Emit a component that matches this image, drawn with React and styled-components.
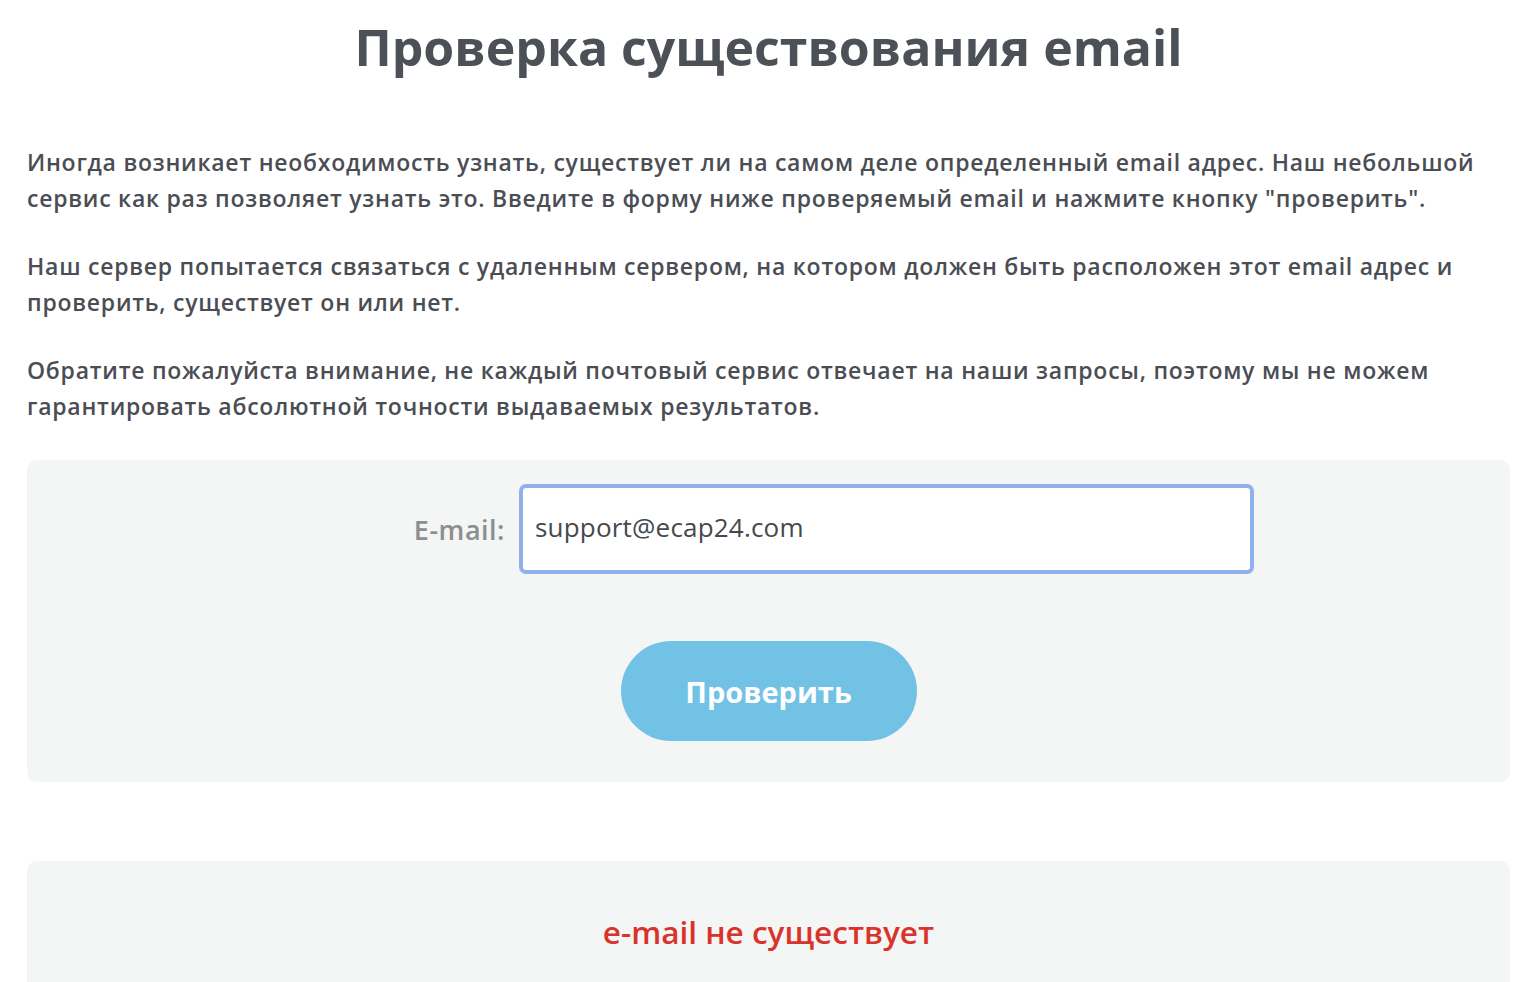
import React, { useState } from 'react';
import styled, { createGlobalStyle } from 'styled-components';

const GlobalStyle = createGlobalStyle`
  html, body {
    margin: 0;
    padding: 0;
    background: #ffffff;
  }
  body {
    font-family: "Open Sans", "Lato", sans-serif;
    color: #4a4e54;
  }
`;

function App() {
  const [email, setEmail] = useState('support@ecap24.com');

  return (
    <>
      <GlobalStyle />
      <Styled.Page>
        <Styled.Title>Проверка существования email</Styled.Title>

        <Styled.Text>
          Иногда возникает необходимость узнать, существует ли на самом деле определенный email адрес. Наш небольшой
          сервис как раз позволяет узнать это. Введите в форму ниже проверяемый email и нажмите кнопку "проверить".
        </Styled.Text>
        <Styled.Text>
          Наш сервер попытается связаться с удаленным сервером, на котором должен быть расположен этот email адрес и
          проверить, существует он или нет.
        </Styled.Text>
        <Styled.Text>
          Обратите пожалуйста внимание, не каждый почтовый сервис отвечает на наши запросы, поэтому мы не можем
          гарантировать абсолютной точности выдаваемых результатов.
        </Styled.Text>

        <Styled.Panel as="form" onSubmit={e => e.preventDefault()}>
          <Styled.Row>
            <Styled.Label htmlFor="email">E-mail:</Styled.Label>
            <Styled.Input id="email" value={email} onChange={e => setEmail(e.target.value)} />
          </Styled.Row>
          <Styled.Button type="submit">Проверить</Styled.Button>
        </Styled.Panel>

        <Styled.Result>
          <Styled.Status>e-mail не существует</Styled.Status>
        </Styled.Result>
      </Styled.Page>
    </>
  );
}

const Styled = {
  Page: styled.main`
    padding: 0 22px 0 27px;
    display: flex;
    flex-direction: column;
  `,
  Title: styled.h1`
    margin: 17px 0 67px;
    text-align: center;
    font-family: "Open Sans", "DejaVu Sans", sans-serif;
    font-weight: 700;
    font-size: 50px;
    line-height: 60px;
    color: #4c5157;
  `,
  Text: styled.p`
    margin: 0 0 32px;
    font-size: 23px;
    line-height: 36px;
    font-weight: 600;
    letter-spacing: 0.75px;
    color: #4a4e54;
  `,
  Panel: styled.div`
    margin-top: 4px;
    background: #f4f5f5;
    border-radius: 10px;
    padding: 24px 0 41px;
    display: flex;
    flex-direction: column;
    align-items: center;
    gap: 67px;
  `,
  Row: styled.div`
    align-self: stretch;
    display: flex;
    align-items: center;
    gap: 14px;
  `,
  Label: styled.label`
    width: 478px;
    text-align: right;
    font-family: "Open Sans", "DejaVu Sans", sans-serif;
    font-weight: 600;
    font-size: 27px;
    letter-spacing: 0.5px;
    color: #8d8e8f;
  `,
  Input: styled.input`
    box-sizing: border-box;
    width: 735px;
    height: 90px;
    border: 4px solid #8fb0ea;
    border-radius: 7px;
    background: #ffffff;
    padding: 0 12px 4px;
    font-family: "Open Sans", "Lato", sans-serif;
    font-size: 26px;
    font-weight: 500;
    letter-spacing: 0.2px;
    color: #45494e;
    outline: none;
  `,
  Button: styled.button`
    width: 296px;
    height: 100px;
    border: none;
    border-radius: 50px;
    background: #72c2e6;
    color: #ffffff;
    font-family: "Open Sans", "DejaVu Sans", sans-serif;
    font-weight: 700;
    font-size: 29px;
    cursor: pointer;
  `,
  Result: styled.section`
    margin-top: 79px;
    background: #f4f5f5;
    border-radius: 10px 10px 0 0;
    height: 160px;
    display: flex;
    justify-content: center;
    padding-top: 51px;
    box-sizing: border-box;
  `,
  Status: styled.p`
    margin: 0;
    font-size: 31.5px;
    line-height: 40px;
    font-weight: 600;
    color: #d9342b;
  `,
};

export default App;
